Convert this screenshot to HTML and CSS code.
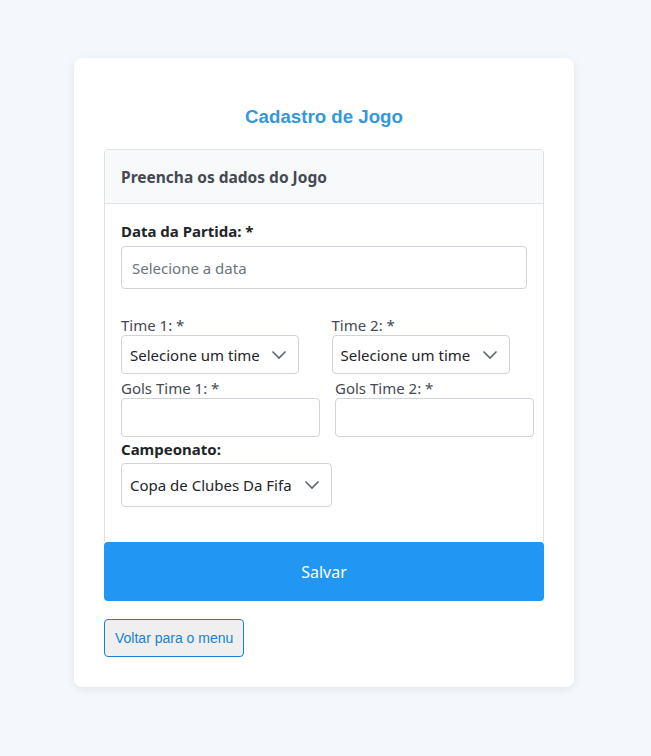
FILE: index.html
```html
<!DOCTYPE html>
<html lang="pt-BR">
<head>
<meta charset="utf-8">
<title>Cadastro de Jogo</title>
<link rel="stylesheet" href="styles.css">
</head>
<body>
<main class="card">
  <h1 class="title">Cadastro de Jogo</h1>
  <section class="panel">
    <div class="panel-header">Preencha os dados do Jogo</div>
    <div class="panel-body">
      <label class="label-bold">Data da Partida: *</label>
      <input class="input-date" type="text" placeholder="Selecione a data">

      <div class="row-times">
        <div class="field">
          <label class="label">Time 1: *</label>
          <div class="select-wrap">
            <div class="select select-time">Selecione um time</div>
            <svg class="chevron" width="16" height="10" viewBox="0 0 16 10"><path d="M1.5 1.5 L8 8 L14.5 1.5" fill="none" stroke="#5b6570" stroke-width="1.6"/></svg>
          </div>
        </div>
        <div class="field">
          <label class="label">Time 2: *</label>
          <div class="select-wrap">
            <div class="select select-time">Selecione um time</div>
            <svg class="chevron" width="16" height="10" viewBox="0 0 16 10"><path d="M1.5 1.5 L8 8 L14.5 1.5" fill="none" stroke="#5b6570" stroke-width="1.6"/></svg>
          </div>
        </div>
      </div>

      <div class="row-gols">
        <div class="field">
          <label class="label">Gols Time 1: *</label>
          <input class="input-gol" type="text">
        </div>
        <div class="field">
          <label class="label">Gols Time 2: *</label>
          <input class="input-gol" type="text">
        </div>
      </div>

      <label class="label-bold camp-label">Campeonato:</label>
      <div class="select-wrap">
        <div class="select select-camp">Copa de Clubes Da Fifa</div>
        <svg class="chevron" width="16" height="10" viewBox="0 0 16 10"><path d="M1.5 1.5 L8 8 L14.5 1.5" fill="none" stroke="#5b6570" stroke-width="1.6"/></svg>
      </div>
    </div>
  </section>
  <button class="btn-save" type="button">Salvar</button>
  <button class="btn-back" type="button">Voltar para o menu</button>
</main>
</body>
</html>
```
FILE: styles.css
```css
* { box-sizing: border-box; }
html, body { margin: 0; padding: 0; }
body {
  background: #f4f7fb;
  font-family: "Noto Sans", "Open Sans", sans-serif;
  color: #212529;
  padding-top: 58px;
  min-height: 756px;
}
.card {
  width: 500px;
  margin: 0 0 0 74px;
  background: #fff;
  border-radius: 8px;
  box-shadow: 0 2px 10px rgba(0,0,0,0.08);
  padding: 46px 30px 30px;
}
.title {
  margin: 0 0 20px;
  text-align: center;
  font-family: "Liberation Sans", Arial, sans-serif;
  font-size: 18.7px;
  font-weight: bold;
  color: #3498db;
  line-height: 25px;
}
.panel {
  border: 1px solid #dee2e6;
  border-radius: 4px 4px 0 0;
  border-bottom: none;
}
.panel-header {
  background: #f8f9fa;
  border-bottom: 1px solid #dee2e6;
  height: 54px;
  padding: 0 16px;
  display: flex;
  align-items: center;
  font-size: 15.5px;
  font-weight: bold;
  color: #444a52;
}
.panel-body {
  padding: 16px 16px 35px;
}
.label-bold {
  display: block;
  font-size: 15px;
  font-weight: bold;
  line-height: 22px;
  color: #212529;
  margin-bottom: 4px;
}
.label {
  display: block;
  font-size: 15px;
  line-height: 20px;
  color: #444a52;
  margin-bottom: 0;
}
.input-date {
  display: block;
  width: 406px;
  height: 43px;
  border: 1px solid #ced4da;
  border-radius: 4px;
  padding: 0 10px;
  font-family: inherit;
  font-size: 15px;
  color: #212529;
}
.input-date::placeholder { color: #6c757d; }
.row-times {
  display: grid;
  grid-template-columns: 1fr 1fr;
  column-gap: 15px;
  margin-top: 26px;
}
.field { display: flex; flex-direction: column; align-items: flex-start; }
.select-wrap { position: relative; display: inline-block; }
.select {
  border: 1px solid #ced4da;
  border-radius: 4px;
  background: #fff;
  font-size: 15px;
  color: #212529;
  display: flex;
  align-items: center;
  padding-left: 8px;
  white-space: nowrap;
}
.select-time { width: 178px; height: 39px; }
.select-camp { width: 211px; height: 44px; }
.chevron { position: absolute; right: 12px; top: 50%; margin-top: -5px; }
.row-gols {
  display: flex;
  gap: 15px;
  margin-top: 4px;
}
.input-gol {
  display: block;
  width: 199px;
  height: 39px;
  border: 1px solid #ced4da;
  border-radius: 4px;
  font-family: inherit;
}
.camp-label { margin-top: 1px; margin-bottom: 3px; }
.btn-save {
  display: block;
  width: 440px;
  height: 59px;
  border: none;
  border-radius: 4px;
  background: #2196f3;
  color: #fff;
  font-family: "Noto Sans", "Open Sans", sans-serif;
  font-size: 16px;
}
.btn-back {
  display: block;
  margin-top: 18px;
  height: 38px;
  padding: 0 10px;
  border: 1px solid #1a7fd4;
  border-radius: 4px;
  background: #efefef;
  color: #1a7fd4;
  font-family: "Liberation Sans", Arial, sans-serif;
  font-size: 14px;
}
```
